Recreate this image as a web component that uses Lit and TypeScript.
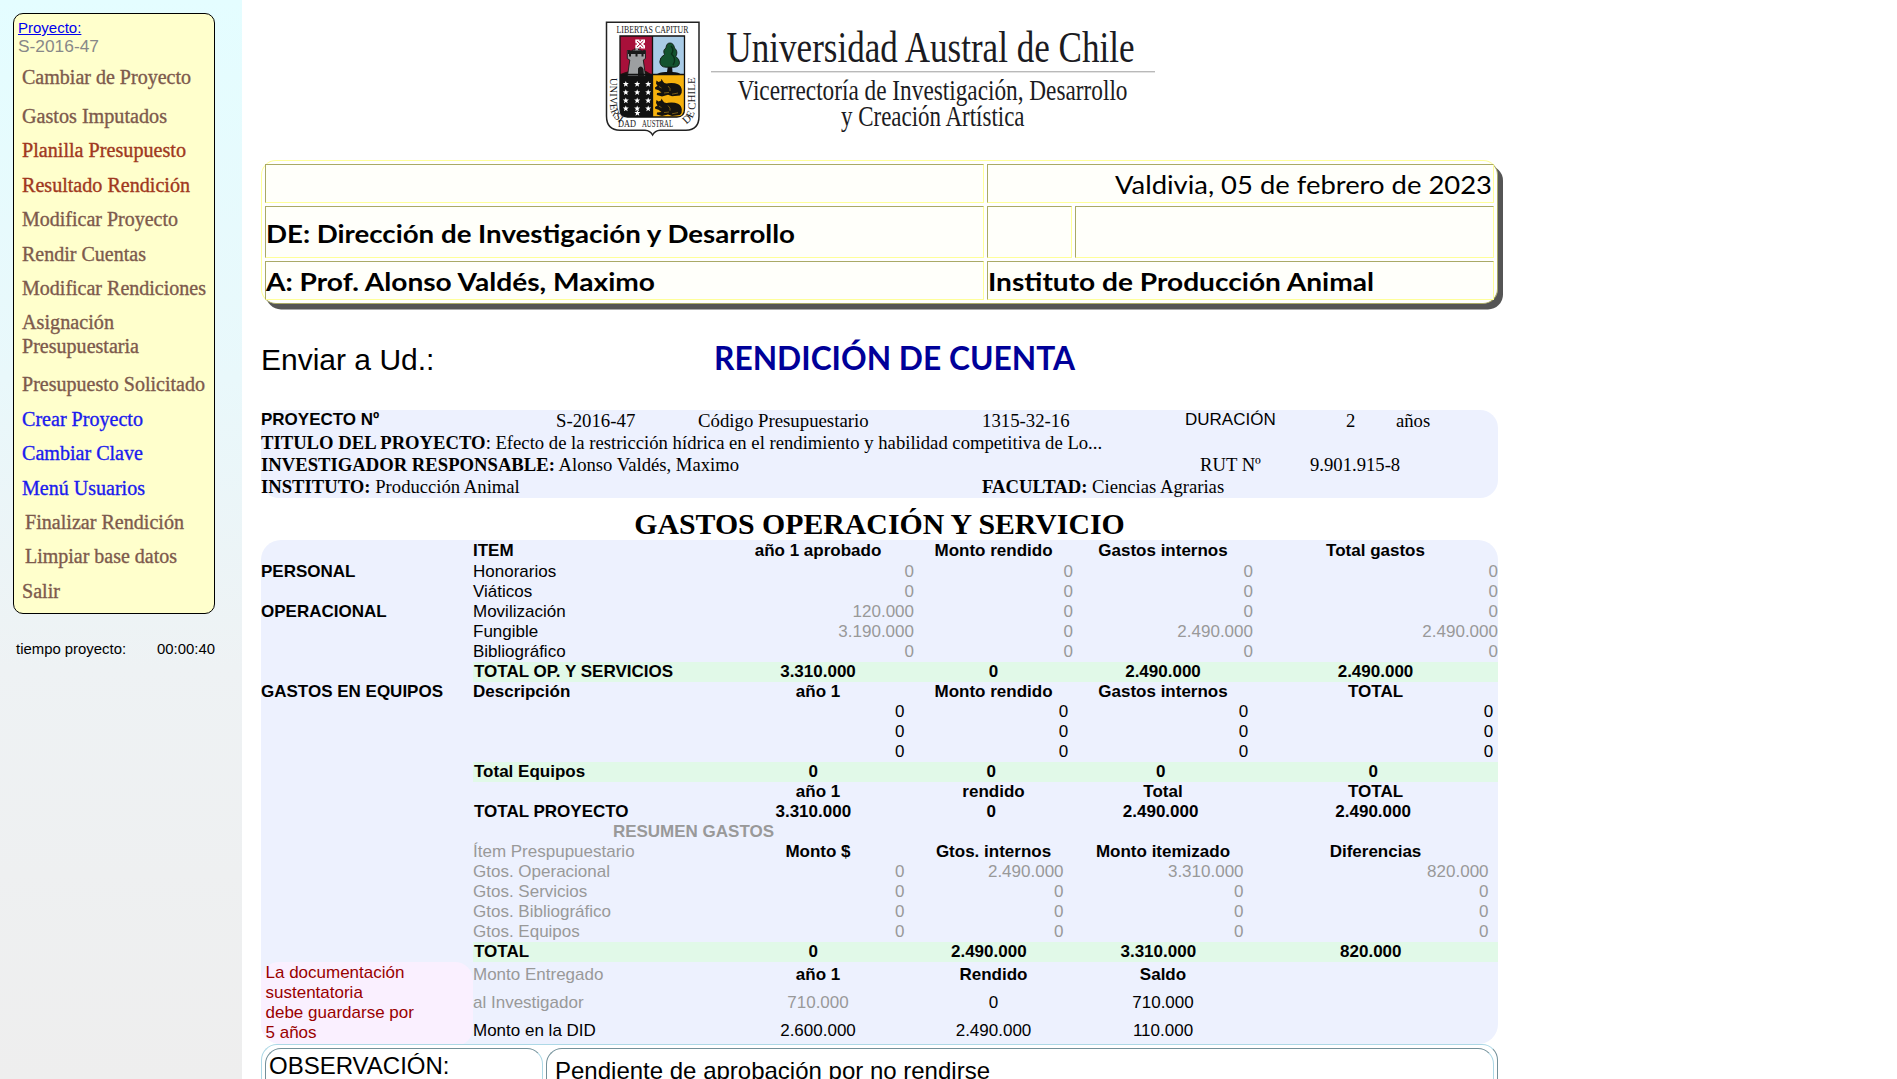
import { LitElement, html, svg, css, nothing } from "lit";
import { customElement } from "lit/decorators.js";
import { classMap } from "lit/directives/class-map.js";

interface MenuLine {
  label: string;
  width: number;
  height: number;
  tone?: string;
  indent?: number;
}

interface Cell {
  text: string;
  align?: "c" | "r" | "l";
  bold?: boolean;
  gray?: boolean;
  /** Number of trailing blanks that push the value to the left. */
  blanks?: number;
  span?: number;
}

interface Row {
  cells: Cell[];
  kind?: string;
}

const MENU: MenuLine[] = [
  { label: "Cambiar de Proyecto", width: 169, height: 39 },
  { label: "Gastos Imputados", width: 145, height: 34.4 },
  { label: "Planilla Presupuesto", width: 164, height: 34.4, tone: "red" },
  { label: "Resultado Rendición", width: 168, height: 34.4, tone: "red" },
  { label: "Modificar Proyecto", width: 156, height: 34.4 },
  { label: "Rendir Cuentas", width: 124, height: 34.4 },
  { label: "Modificar Rendiciones", width: 184, height: 34.4 },
  { label: "Asignación", width: 92, height: 23.5 },
  { label: "Presupuestaria", width: 117, height: 38.5 },
  { label: "Presupuesto Solicitado", width: 183, height: 34.4 },
  { label: "Crear Proyecto", width: 121, height: 34.4, tone: "blue" },
  { label: "Cambiar Clave", width: 121, height: 34.4, tone: "blue" },
  { label: "Menú Usuarios", width: 123, height: 34.4, tone: "blue" },
  { label: "Finalizar Rendición", width: 159, height: 34.4, indent: 2.5 },
  { label: "Limpiar base datos", width: 152, height: 34.4, indent: 2.5 },
  { label: "Salir", width: 38, height: 34.4 },
];

const l = (text: string, o: Partial<Cell> = {}): Cell => ({ text, align: "l", ...o });
const c = (text: string, o: Partial<Cell> = {}): Cell => ({ text, align: "c", ...o });
const r = (text: string, o: Partial<Cell> = {}): Cell => ({ text, align: "r", ...o });
const B = { bold: true };
const G = { gray: true };

const heads = (a: string, b: string, d: string, e: string): Cell[] => [c(a, B), c(b, B), c(d, B), c(e, B)];
const sums = (v: string[], n: number[]): Cell[] => v.map((t, i) => c(t, { bold: true, blanks: n[i] }));
const grays = (...v: string[]): Cell[] => v.map((t) => r(t, G));
const equip = (): Row => ({ cells: [l(""), l(""), ...[2, 1, 1, 1].map((n) => r("0", { blanks: n }))] });
const resumen = (name: string, v: string[]): Row => ({
  cells: [l(""), l(name, G), ...v.map((t) => r(t, { gray: true, blanks: 2 }))],
});

const ROWS: Row[] = [
  { kind: "first", cells: [l(""), l("ITEM", B), ...heads("año 1 aprobado", "Monto rendido", "Gastos internos", "Total gastos")] },
  { cells: [l("PERSONAL", B), l("Honorarios"), ...grays("0", "0", "0", "0")] },
  { cells: [l(""), l("Viáticos"), ...grays("0", "0", "0", "0")] },
  { cells: [l("OPERACIONAL", B), l("Movilización"), ...grays("120.000", "0", "0", "0")] },
  { cells: [l(""), l("Fungible"), ...grays("3.190.000", "0", "2.490.000", "2.490.000")] },
  { cells: [l(""), l("Bibliográfico"), ...grays("0", "0", "0", "0")] },
  { kind: "green", cells: [l(""), l("TOTAL OP. Y SERVICIOS", B), ...sums(["3.310.000", "0", "2.490.000", "2.490.000"], [0, 0, 0, 0])] },
  { cells: [l("GASTOS EN EQUIPOS", B), l("Descripción", B), ...heads("año 1", "Monto rendido", "Gastos internos", "TOTAL")] },
  equip(),
  equip(),
  equip(),
  { kind: "green", cells: [l(""), l("Total Equipos", B), ...sums(["0", "0", "0", "0"], [2, 1, 1, 1])] },
  { cells: [l(""), l(""), ...heads("año 1", "rendido", "Total", "TOTAL")] },
  { kind: "shift", cells: [l(""), l("TOTAL PROYECTO", B), ...sums(["3.310.000", "0", "2.490.000", "2.490.000"], [2, 1, 1, 1])] },
  { cells: [l(""), c("RESUMEN GASTOS", { bold: true, gray: true, span: 2 }), l(""), l(""), l("")] },
  { cells: [l(""), l("Ítem Prespupuestario", G), ...heads("Monto $", "Gtos. internos", "Monto itemizado", "Diferencias")] },
  resumen("Gtos. Operacional", ["0", "2.490.000", "3.310.000", "820.000"]),
  resumen("Gtos. Servicios", ["0", "0", "0", "0"]),
  resumen("Gtos. Bibliográfico", ["0", "0", "0", "0"]),
  resumen("Gtos. Equipos", ["0", "0", "0", "0"]),
  { kind: "green", cells: [l(""), l("TOTAL", B), ...sums(["0", "2.490.000", "3.310.000", "820.000"], [2, 2, 2, 2])] },
];

const FINAL: Cell[][] = [
  [l("Monto Entregado", G), c("año 1", B), c("Rendido", B), c("Saldo", B)],
  [l("al Investigador", G), c("710.000", G), c("0"), c("710.000")],
  [l("Monto en la DID"), c("2.600.000"), c("2.490.000"), c("110.000")],
];

/** One line of text set to an exact advance width. */
const fitted = (text: string, width: number, height: number, baseline: number, cls: string) => html`
  <svg class="fit ${cls}" width=${width} height=${height}>
    <text x="0" y=${baseline} textLength=${width} lengthAdjust="spacingAndGlyphs">${text}</text>
  </svg>
`;

@customElement("uach-logo")
class UachLogo extends LitElement {
  static styles = css`
    :host { display: block; }
    svg { display: block; overflow: visible; }
    .serif { font-family: "Liberation Serif", serif; fill: #1b1b22; }
    .big { font-size: 44px; }
    .mid { font-size: 28.5px; }
    .motto { font-size: 10.5px; }
    .ring { font-size: 11px; }
  `;

  private star(x: number, y: number) {
    return svg`<path fill="#fff" transform="translate(${x} ${y})"
      d="M0-3.1L.8-1 3-.9 1.3.5 1.9 2.7 0 1.4-1.9 2.7-1.3.5-3-.9-.8-1Z"/>`;
  }

  private cow(y: number) {
    return svg`<g transform="translate(0 ${y})">
      <path fill="#15130f" d="M656.5 80.5L658.5 82 661 81 661.5 78.8 663 81.5Q664.5 84 668 83.2 674 82.5 678 84.2 681.5 86 681.8 90 682.3 93.5 680 95.5L672 96.3 668 94.8 662 96.4 656.8 95 657 93 661.5 92.5 658.5 90.2 655.2 89.2 655 87.5 657.5 85.8 656 83.5Z"/>
      <path fill="none" stroke="#b98a1c" stroke-width=".6" d="M659 86.5L661.5 88M664 93L669 92.4M672 94.2L678 93M668 86Q671 88.5 670 91"/>
    </g>`;
  }

  render() {
    const stars = [85.5, 93.8, 102, 110];
    return html`
      <svg width="560" height="125" viewBox="600 15 560 125">
        <path fill="#fff" stroke="#222" stroke-width="1.5"
          d="M606.5 22.2H699V116Q699 130.2 686 130.2H660Q655 130.4 652.6 135 650.2 130.4 645 130.2H620Q606.5 130.2 606.5 116Z"/>
        <clipPath id="field"><path d="M620 36H684.5V109Q684.5 117 677 117H627.5Q620 117 620 109Z"/></clipPath>
        <g clip-path="url(#field)">
          <rect x="620" y="36" width="32.5" height="38.5" fill="#a8103a"/>
          <rect x="652.5" y="36" width="32" height="38.5" fill="#a9cbe6"/>
          <rect x="620" y="74.5" width="32.5" height="43" fill="#111"/>
          <rect x="652.5" y="74.5" width="32" height="43" fill="#f7b20d"/>
          <path fill="#26120f" d="M620 75Q626 70.5 633 71.5L646 71 652.5 75Z"/>
          <path fill="#9d9fa1" stroke="#1a1a1a" stroke-width=".9"
            d="M627.3 58.5V50.5H630V52H632.3V50H635V48H638.5V50H641V52H643.5V50.5H645.5V58.5L643.3 60 645.5 76H627.5L629.8 60Z"/>
          <path fill="#1a1a1a" d="M628 50.5H645V54H628ZM629 54H631V56.5H629ZM635.5 54H637.5V56.5H635.5ZM641.5 54H643.5V56.5H641.5ZM638 68.5Q641 64.5 643.5 69L644 76H638Z"/>
          <path fill="#fff" d="M635.3 39.5H645V48.5H635.3Z"/>
          <path stroke="#a8103a" stroke-width="1" d="M637 41L643.4 47M643.4 41L637 47"/>
          <path fill="#a8103a" d="M638.8 39.5L640.2 41.5 641.6 39.5ZM638.8 48.5L640.2 46.5 641.6 48.5ZM635.3 42.6L637.2 44 635.3 45.4ZM645 42.6L643.1 44 645 45.4Z"/>
          <path fill="#111" d="M655.5 75Q660 71.5 667 72L668 65H672L672.5 72Q679 72 681.5 75Z"/>
          <path fill="#14532f" stroke="#111b14" stroke-width=".9"
            d="M670 43Q666.3 43 666 48 662.5 50 664.5 54.5 659.5 57.5 659.8 62 660.5 67.2 666 67.2H674Q679.3 67 679.5 62.5 679.3 59 675.8 56.5 678.5 51.5 674.5 48 673.6 43 670 43Z"/>
          <path fill="none" stroke="#0b2e19" stroke-width="1.4" d="M671 46Q674.5 50 671.5 54 677 59 673 65"/>
          ${stars.map((y) => [626.6, 638, 649].map((x) => this.star(x - 0.8, y - 1.5)))}
          ${this.star(637.4, 113)}
          ${this.cow(0)}${this.cow(19.6)}
        </g>
        <path fill="none" stroke="#111" stroke-width="1.3" d="M620 36H684.5V109Q684.5 117 677 117H627.5Q620 117 620 109ZM652.5 36V117M620 74.5H684.5"/>
        <text class="serif motto" x="616.5" y="33.4" textLength="72" lengthAdjust="spacingAndGlyphs">LIBERTAS CAPITUR</text>
        <path id="left" fill="none" d="M609.8 78V104Q610 118 622 124"/>
        <path id="right" fill="none" d="M686 124Q695.5 119 695.5 104V76"/>
        <text class="serif ring"><textPath href="#left" textLength="49" lengthAdjust="spacingAndGlyphs">UNIVERSI</textPath></text>
        <text class="serif ring" x="618" y="126.6" textLength="18" lengthAdjust="spacingAndGlyphs">DAD</text>
        <text class="serif ring" x="642" y="127" textLength="31" lengthAdjust="spacingAndGlyphs">AUSTRAL</text>
        <text class="serif ring"><textPath href="#right" textLength="50" lengthAdjust="spacingAndGlyphs">DE CHILE</textPath></text>

        <text class="serif big" x="726.5" y="62" textLength="408" lengthAdjust="spacingAndGlyphs">Universidad Austral de Chile</text>
        <rect x="711" y="71" width="444" height="1.4" fill="#b9b9b9"/>
        <text class="serif mid" x="737.5" y="100" textLength="390" lengthAdjust="spacingAndGlyphs">Vicerrectoría de Investigación, Desarrollo</text>
        <text class="serif mid" x="841" y="126" textLength="183.500" lengthAdjust="spacingAndGlyphs">y Creación Artística</text>
      </svg>
    `;
  }
}

@customElement("app-root")
class AppRoot extends LitElement {
  static styles = css`
    :host {
      display: block;
      height: 1079px;
      overflow: hidden;
      background: #fff;
      color: #000;
      font-family: "Liberation Sans", Arial, sans-serif;
      font-size: 17px;
    }
    .page { display: flex; height: 1079px; overflow: hidden; }
    .side {
      box-sizing: border-box;
      width: 242px;
      flex: none;
      padding: 13px 0 0 13px;
      background: linear-gradient(#e4fdff, #e9f8fb 35%, #eef2f4 62%, #eeeeee);
    }
    .menu {
      box-sizing: border-box;
      width: 202px;
      height: 601px;
      padding: 4px 0 0 4px;
      border: 1px solid #000;
      border-radius: 10px;
      background: #ffffcc;
    }
    .link { display: block; width: max-content; font-size: 15px; line-height: 19px; height: 18px; color: #0000ee; text-decoration: underline; }
    .code { font-size: 17.33px; line-height: 20px; height: 27px; color: #888; }
    .items { display: flex; flex-direction: column; padding-left: 4px; }
    .item { flex: none; color: #7d5a4c; }
    .item.red { color: #a03820; }
    .item.blue { color: #1b1bee; }
    .indent { padding-left: 2.5px; }
    .fit { display: block; overflow: visible; fill: currentColor; }
    .entry { font-family: "Liberation Serif", serif; font-size: 20px; stroke: currentColor; stroke-width: 0.35px; }
    .timer { display: flex; justify-content: space-between; padding: 26px 27px 0 3px; font-size: 14.9px; line-height: 18px; }

    .main { width: 1237px; flex: none; padding-left: 19px; display: flex; flex-direction: column; }
    .logo { padding: 15px 0 0 339px; height: 145px; flex: none; }
    .letter {
      box-sizing: border-box;
      flex: none;
      width: 1237px;
      height: 144px;
      display: grid;
      grid-template-columns: 719px 85px 419px;
      grid-template-rows: 39px 52px 39px;
      gap: 3px;
      padding: 3px;
      border: 1px solid;
      border-color: #ffff99 #aaaa66 #aaaa66 #ffff99;
      border-radius: 15px;
      box-shadow: 5px 5.500px 0 #555;
      background: #fff;
    }
    .box {
      box-sizing: border-box;
      border: 1px solid;
      border-color: #aaaa66 #ffff99 #ffff99 #aaaa66;
      background: #fffffa;
    }
    .wide { grid-column: span 2; }
    .end { display: flex; justify-content: flex-end; padding-right: 1px; }
    .lato { font-family: Lato, "Open Sans", sans-serif; font-size: 25.5px; }
    .strong { font-weight: 700; }
    .headline { display: flex; height: 106px; flex: none; }
    .send { width: 453px; padding-top: 38px; font-size: 30px; line-height: 36px; }
    .title { color: #000099; padding-top: 36px; }
    .title-text { font-family: Lato, "Open Sans", sans-serif; font-size: 32.5px; font-weight: 700; }

    .project {
      flex: none;
      height: 88px;
      background: #edf1fe;
      border-radius: 18px;
      font-family: "Liberation Serif", serif;
      font-size: 18.67px;
      line-height: 22px;
    }
    .prow { display: grid; height: 22px; white-space: nowrap; }
    .p1 { grid-template-columns: 295px 142px 284px 203px 161px 50px 1fr; }
    .p3 { grid-template-columns: 939px 110px 1fr; }
    .p4 { grid-template-columns: 721px 1fr; }
    .n19 { font-size: 18.8px; }
    .sans { font-family: "Liberation Sans", Arial, sans-serif; font-size: 17px; line-height: 20px; }
    .section {
      flex: none;
      height: 42px;
      line-height: 51px;
      text-align: center;
      font-family: "Liberation Serif", serif;
      font-weight: 700;
      font-size: 29.800px;
    }

    .report { flex: none; height: 504px; background: #edf1fe; border-radius: 20px; overflow: hidden; }
    .row { display: grid; grid-template-columns: 212px 249px 192px 159px 180px 245px; height: 20px; line-height: 19px; }
    .row.first { height: 22px; line-height: 21px; }
    .green { background: linear-gradient(#e1f9e8, #e1f9e8) 212px 0 no-repeat; }
    .shifted { padding-left: 1px; }
    .cell { white-space: pre; }
    .l { text-align: left; }
    .c { text-align: center; }
    .r { text-align: right; }
    .b { font-weight: 700; }
    .g { color: #999; }
    .s1 { padding-right: 4.720px; }
    .s2 { padding-right: 9.450px; }
    .two { grid-column: span 2; padding-right: 0; }
    .tail { display: grid; grid-template-columns: 212px 1fr; height: 82px; }
    .notice {
      box-sizing: border-box;
      padding: 1px 0 0 4.500px;
      border-radius: 18px;
      background: #faf0ff;
      color: #990000;
      line-height: 20px;
      white-space: nowrap;
    }
    .line { display: grid; grid-template-columns: 249px 192px 159px 180px 245px; height: 28px; line-height: 26px; }

    .notes {
      box-sizing: border-box;
      flex: none;
      width: 1237px;
      height: 80px;
      display: grid;
      grid-template-columns: 278px 948px;
      gap: 3px;
      padding: 3px;
      border: 1px solid;
      border-color: #add8e6 #73909a #73909a #add8e6;
      border-radius: 16px;
      font-size: 24px;
      line-height: 28px;
      white-space: nowrap;
    }
    .note { box-sizing: border-box; border: 1px solid; border-color: #73909a #add8e6 #add8e6 #73909a; border-radius: 16px; }
    .n1 { padding: 3px 0 0 3px; }
    .n2 { padding: 8px 0 0 8px; }
  `;

  private cell(x: Cell, shifted = false) {
    return html`<div class=${classMap({
      cell: true,
      [x.align ?? "l"]: true,
      b: !!x.bold,
      g: !!x.gray,
      s1: x.blanks === 1,
      s2: x.blanks === 2,
      two: x.span === 2,
      shifted,
    })}>${x.text || nothing}</div>`;
  }

  render() {
    return html`
      <div class="page">
        <aside class="side">
          <nav class="menu">
            <a class="link">Proyecto:</a>
            <div class="code">S-2016-47</div>
            <div class="items">
              ${MENU.map((m) => html`
                <div class="item ${m.tone ?? ""} ${m.indent ? "indent" : ""}">
                  ${fitted(m.label, m.width, m.height, 20.5, "entry")}
                </div>`)}
            </div>
          </nav>
          <div class="timer"><span>tiempo proyecto:</span><span>00:00:40</span></div>
        </aside>
        <main class="main">
          <div class="logo"><uach-logo></uach-logo></div>
          <section class="letter">
            <div class="box"></div>
            <div class="box wide end">${fitted("Valdivia, 05 de febrero de 2023", 377, 37, 28.5, "lato")}</div>
            <div class="box">${fitted("DE: Dirección de Investigación y Desarrollo", 529, 50, 35.5, "lato strong")}</div>
            <div class="box"></div>
            <div class="box"></div>
            <div class="box">${fitted("A: Prof. Alonso Valdés, Maximo", 389, 37, 28.5, "lato strong")}</div>
            <div class="box wide">${fitted("Instituto de Producción Animal", 386, 37, 28.5, "lato strong")}</div>
          </section>
          <div class="headline">
            <div class="send">Enviar a Ud.:</div>
            <div class="title">${fitted("RENDICIÓN DE CUENTA", 361, 40, 30, "title-text")}</div>
          </div>
          <section class="project">
            <div class="prow p1">
              <b class="sans">PROYECTO Nº</b><span class="n19">S-2016-47</span><span class="n19">Código Presupuestario</span>
              <span class="n19">1315-32-16</span><span class="sans">DURACIÓN</span><span>2</span><span>años</span>
            </div>
            <div class="prow"><span><b>TITULO DEL PROYECTO</b>: Efecto de la restricción hídrica en el rendimiento y habilidad competitiva de Lo...</span></div>
            <div class="prow p3"><span><b>INVESTIGADOR RESPONSABLE:</b> Alonso Valdés, Maximo</span><span>RUT Nº</span><span>9.901.915-8</span></div>
            <div class="prow p4"><span><b>INSTITUTO:</b> Producción Animal</span><span><b>FACULTAD:</b> Ciencias Agrarias</span></div>
          </section>
          <div class="section">GASTOS OPERACIÓN Y SERVICIO</div>
          <section class="report">
            ${ROWS.map((row) => html`
              <div class="row ${row.kind ?? ""}">
                ${row.cells.map((x, i) => this.cell(x, i === 1 && (row.kind === "green" || row.kind === "shift")))}
              </div>`)}
            <div class="tail">
              <div class="notice">La documentación<br />sustentatoria<br />debe guardarse por<br />5 años</div>
              <div>${FINAL.map((cells) => html`<div class="line">${cells.map((x) => this.cell(x))}</div>`)}</div>
            </div>
          </section>
          <section class="notes">
            <div class="note n1">OBSERVACIÓN:</div>
            <div class="note n2">Pendiente de aprobación por no rendirse</div>
          </section>
        </main>
      </div>
    `;
  }
}
